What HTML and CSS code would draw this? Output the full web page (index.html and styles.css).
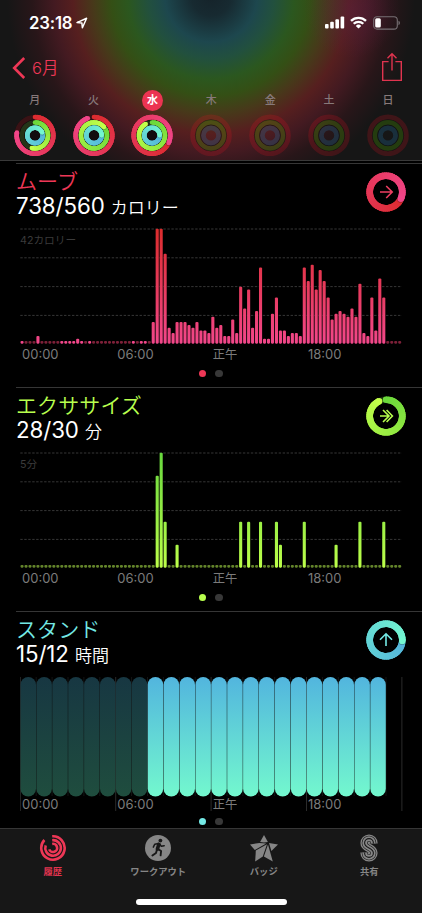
FILE: index.html
```html
<!DOCTYPE html>
<html lang="ja">
<head>
<meta charset="utf-8">
<title>アクティビティ</title>
<link rel="stylesheet" href="styles.css">
</head>
<body>
<div class="app">
  <header class="header">
    <div class="status">
      <span class="time">23:18</span>
      <svg class="loc" width="12" height="12" viewBox="0 0 12 12"><path d="M1 5.6 10.6 1.2 6.4 10.8 5.9 6.1Z" fill="none" stroke="#fff" stroke-width="1.5" stroke-linejoin="round"/></svg>
      <svg class="signal" width="20" height="13" viewBox="0 0 20 13" fill="#fff"><rect x="0" y="8" width="3.6" height="4.6" rx="1"/><rect x="5.2" y="5.8" width="3.6" height="6.8" rx="1"/><rect x="10.4" y="3.3" width="3.6" height="9.3" rx="1"/><rect x="15.6" y=".6" width="3.6" height="12" rx="1"/></svg>
      <svg class="wifi" width="17" height="13" viewBox="0 0 17 13"><g fill="none" stroke="#fff" stroke-width="2.3"><path d="M1 4.9a10.6 10.6 0 0 1 15 0"/><path d="M3.7 7.8a6.8 6.8 0 0 1 9.6 0"/></g><path d="M8.5 12.6 5.8 9.9a3.9 3.9 0 0 1 5.4 0Z" fill="#fff"/></svg>
      <svg class="battery" width="27" height="14" viewBox="0 0 27 14"><rect x=".7" y=".7" width="23.6" height="12.4" rx="3.4" fill="none" stroke="#777074" stroke-width="1.1"/><path d="M25.5 4.8v4.4a2.4 2.4 0 0 0 0-4.4Z" fill="#777074"/><rect x="2.2" y="2.3" width="5.6" height="9.2" rx="1.5" fill="#fff"/></svg>
    </div>
    <nav class="nav">
      <svg width="14" height="24" viewBox="0 0 14 24"><path d="M12.2 2 2.2 12l10 10" fill="none" stroke="#ee3756" stroke-width="2.6"/></svg>
      <span class="back">6月</span>
      <svg class="share" width="22" height="30" viewBox="0 0 22 30"><path d="M7.6 9.6H1.7v18.8h18.6V9.6h-5.9M11 18.5V2M6.5 6.3 11 1.8l4.5 4.5" fill="none" stroke="#e0344f" stroke-width="1.4"/></svg>
    </nav>
    <div class="week" id="week"></div>
  </header>

  <main>
    <section class="card move">
      <div class="head"><div><h2>ムーブ</h2><p class="value">738/560 <small>カロリー</small></p></div><svg class="badge" width="40" height="40" viewBox="-20 -20 40 40" data-ring="move"></svg></div>
      <div class="plot"><svg id="moveChart" width="384" height="117" viewBox="0 0 384 117"></svg><span class="scale">42カロリー</span></div>
      <div class="axis"><span>00:00</span><span>06:00</span><span class="jp">正午</span><span>18:00</span></div>
      <div class="pager"><i class="on"></i><i></i></div>
    </section>
    <section class="card exercise">
      <div class="head"><div><h2>エクササイズ</h2><p class="value">28/30 <small>分</small></p></div><svg class="badge" width="40" height="40" viewBox="-20 -20 40 40" data-ring="exercise"></svg></div>
      <div class="plot"><svg id="exerciseChart" width="384" height="117" viewBox="0 0 384 117"></svg><span class="scale">5分</span></div>
      <div class="axis"><span>00:00</span><span>06:00</span><span class="jp">正午</span><span>18:00</span></div>
      <div class="pager"><i class="on"></i><i></i></div>
    </section>
    <section class="card stand">
      <div class="head"><div><h2>スタンド</h2><p class="value">15/12 <small>時間</small></p></div><svg class="badge" width="40" height="40" viewBox="-20 -20 40 40" data-ring="stand"></svg></div>
      <div class="plot"><svg id="standChart" width="384" height="136" viewBox="0 0 384 136"></svg></div>
      <div class="axis"><span>00:00</span><span>06:00</span><span class="jp">正午</span><span>18:00</span></div>
      <div class="pager"><i class="on"></i><i></i></div>
    </section>
  </main>

  <footer class="tabs">
    <div class="tab active">
      <svg width="28" height="28" viewBox="-14 -14 28 28"><g fill="none" stroke="#ee3756" stroke-width="2.6"><path d="M-.8-11.7A11.7 11.7 0 1 1-8.6-8"/><path d="M-.8-7.8A7.8 7.8 0 1 1-7.3-2.6"/><path d="M-.8-4.1A4.1 4.1 0 1 1-3.8 1.4"/></g></svg>
      <span>履歴</span>
    </div>
    <div class="tab">
      <svg width="28" height="28" viewBox="-14 -14 28 28"><circle r="13" fill="#868686"/><circle cx="2.4" cy="-7.4" r="1.9" fill="#171717"/><g fill="none" stroke="#171717" stroke-linecap="round" stroke-linejoin="round"><path d="M.8-3.6-.6 1" stroke-width="3.6"/><path d="M.6-4.6-3.2-3.8-4.7-.8M1.6-4.3 3.3-1.7 6.2-2.3" stroke-width="1.5"/><path d="M0 1.1 3.1 3 2.6 7.4M-1 1.4-2 4.9-5.6 7.5" stroke-width="1.9"/></g></svg>
      <span>ワークアウト</span>
    </div>
    <div class="tab">
      <svg width="30" height="28" viewBox="-15 -14 30 28" fill="#868686"><path d="M0-13 3.9-6 0-5.4-3.9-6Z"/><path d="M-14-3.6-4.6-4.9 2.2-4.4-9.2 2Z"/><path d="M5-5 14-3.6 7.4 2.9Z"/><path d="M-8.2 2.6 3-3.7-1.2 8.6-8.8 13.4Z"/><path d="M4-3.4 8.8 13.4-.1 8.6Z"/></svg>
      <span>バッジ</span>
    </div>
    <div class="tab">
      <svg width="20" height="28" viewBox="0 -1 20 28"><g fill="none"><path class="s s1" d="M14.4 8.5V8a4.4 4.4 0 0 0-8.8 0c0 5.6 8.8 4.4 8.8 10a4.4 4.4 0 0 1-8.8 0v-.5"/><path class="s s2" d="M14.4 8.5V8a4.4 4.4 0 0 0-8.8 0c0 5.6 8.8 4.4 8.8 10a4.4 4.4 0 0 1-8.8 0v-.5"/><path class="s s3" d="M14.4 8.5V8a4.4 4.4 0 0 0-8.8 0c0 5.6 8.8 4.4 8.8 10a4.4 4.4 0 0 1-8.8 0v-.5"/><path class="s s4" d="M14.4 8.5V8a4.4 4.4 0 0 0-8.8 0c0 5.6 8.8 4.4 8.8 10a4.4 4.4 0 0 1-8.8 0v-.5"/></g></svg>
      <span>共有</span>
    </div>
    <div class="home"></div>
  </footer>
</div>
<script src="app.js"></script>
</body>
</html>
```
FILE: styles.css
```css
* { box-sizing: border-box; }
body { margin: 0; background: #000; color: #fff; font-family: Inter, "Noto Sans CJK JP", sans-serif; }
svg { display: block; flex: none; }
h2, p { margin: 0; }
.app { width: 422px; height: 913px; display: flex; flex-direction: column; overflow: hidden; }

.header {
  height: 161px; flex: none; border-bottom: 1px solid #393939;
  background:
    radial-gradient(circle at 352px 10px, rgba(95, 32, 75, .38) 0, rgba(95, 32, 75, 0) 48px),
    radial-gradient(circle at 211px -4px, #15232a 0, #172a31 20px, #1d474e 46px, #22503e 63px, #2b571f 83px, #344f15 100px, #47391a 118px, #561f1f 138px, #431a21 157px, #281619 179px, #161616 204px) #161616;
}
.status { display: flex; height: 46px; padding: 16px 22px 0 29px; align-items: flex-start; }
.time { font-size: 16.8px; line-height: 14px; font-weight: 600; width: 47px; letter-spacing: -.2px; white-space: nowrap; }
.loc { margin-top: 1px; }
.signal { margin: 0 5px 0 auto; }
.wifi { margin-right: 6px; }
.battery { width: 27px; }
.nav { display: flex; height: 44px; padding: 9px 19px 0 12px; align-items: flex-start; color: #ee3756; }
.nav svg:first-child { margin-top: 1px; }
.back { font-size: 16.5px; line-height: 26px; margin-left: 6px; font-weight: 350; }
.share { margin: -3px 0 0 auto; }
.week { display: grid; grid-template-columns: repeat(7, 58.86px); margin-left: 5.3px; }
.day { display: flex; flex-direction: column; align-items: center; }
.day span { width: 21px; height: 21px; border-radius: 50%; font-size: 11px; font-weight: 500; line-height: 21px; text-align: center; color: #87797a; }
.day.today span { background: #ec3452; color: #fff; font-weight: 700; }
.day svg { margin-top: 3px; }

main { height: 667px; padding: 2px 0 0 16px; flex: none; }
.card { height: 224px; border-top: 1px solid #363636; }
.head { display: flex; justify-content: space-between; height: 64px; padding: 6px 16px 0 0; }
.head h2 { font-size: 21px; line-height: 24px; font-weight: 350; height: 24px; white-space: nowrap; letter-spacing: .1px; }
.value { font-size: 22.3px; line-height: 24px; height: 24px; font-weight: 400; white-space: nowrap; letter-spacing: -.1px; }
.value small { font-size: 17px; letter-spacing: 0; font-weight: 350; }
.badge { margin-top: 2px; }
.move h2 { color: #ee3756; }
.exercise h2 { color: #b8ff4e; }
.stand h2 { color: #74e9e5; }
.plot { display: grid; margin-left: 4px; height: 117px; }
.plot > * { grid-area: 1 / 1; }
.scale { font-size: 10.7px; line-height: 14px; color: #3b3b3b; margin-top: 6px; }
.axis { display: grid; grid-template-columns: repeat(4, 95.35px); margin-left: 6px; height: 16px; line-height: 16px; font-size: 13px; color: #7b7b7b; margin-top: 1px; }
.axis .jp { font-size: 12.3px; padding-top: 1px; }
.pager { display: flex; gap: 9px; margin: 8px 0 0 183px; }
.pager i { width: 7.4px; height: 7.4px; border-radius: 50%; background: #383838; }
.move .on { background: #ee3756; }
.exercise .on { background: #b8ff4e; }
.stand .on { background: #74e9e5; }
.stand .plot { height: 120px; margin-top: 1px; }
.stand .axis { margin-top: -1px; }
.stand .pager { margin-top: 6px; }

.tabs { height: 85px; flex: none; background: #171717; border-top: 1px solid #363636; display: grid; grid-template-columns: repeat(4, 105.5px); grid-template-rows: 70px 6px; }
.tab { display: flex; flex-direction: column; align-items: center; padding-top: 5px; color: #868686; font-size: 9.3px; font-weight: 700; line-height: 14px; }
.tab span { margin-top: 3px; white-space: nowrap; }
.tab.active { color: #e0344f; }
.s { stroke: #868686; }
.s1 { stroke-width: 8.4; }
.s2 { stroke: #171717; stroke-width: 5.8; }
.s3 { stroke-width: 4.6; }
.s4 { stroke: #171717; stroke-width: 1.1; }
.home { grid-column: 1 / -1; justify-self: center; width: 151px; height: 6px; border-radius: 3px; background: #fff; }
```
FILE: app.js
```js
const COLORS = {
  move: [[220, 44, 48], [241, 70, 138]],
  exercise: [[108, 216, 60], [196, 255, 74]],
  stand: [[84, 180, 220], [116, 248, 208]]
};
const mix = ([a, b], t) => 'rgb(' + a.map((v, i) => Math.round(v + (b[i] - v) * t)).join(',') + ')';

// Progress ring starting at twelve o'clock; values above 1 overlap the first lap.
function ring(r, w, frac, kind) {
  const n = 60, pt = a => (r * Math.sin(a)).toFixed(2) + ' ' + (-r * Math.cos(a)).toFixed(2);
  let out = '';
  const end = frac * 2 * Math.PI;
  const start = Math.max(0, frac - 1) * 2 * Math.PI;
  const [ax, ay] = pt(0).split(' ');
  out += `<circle r="${r}" fill="none" stroke="${mix(COLORS[kind], 0)}" stroke-width="${w}" opacity=".2"/>`;
  if (frac < 1) out += `<circle cx="${ax}" cy="${ay}" r="${w / 2}" fill="${mix(COLORS[kind], 0)}"/>`;
  for (let i = 0; i < n; i++) {
    const a = start + (end - start) * i / n;
    const b = Math.min(end, start + (end - start) * (i + 2.5) / n);
    out += `<path d="M${pt(a)}A${r} ${r} 0 0 1 ${pt(b)}" fill="none" stroke="${mix(COLORS[kind], i / n)}" stroke-width="${w}"/>`;
  }
  const [ex, ey] = pt(end).split(' ');
  if (frac > 1) {
    const [sx, sy] = pt(end + .7 / r).split(' ');
    out += `<circle cx="${sx}" cy="${sy}" r="${w / 2 - .1}" fill="#000" opacity=".3"/>`;
  }
  return out + `<circle cx="${ex}" cy="${ey}" r="${w / 2}" fill="${mix(COLORS[kind], 1)}"/>`;
}

const week = [['月', .775, .54, 1.19], ['火', .945, 1.14, 1.25], ['水', 1.318, .92, 1.25], ['木'], ['金'], ['土'], ['日']];
document.getElementById('week').innerHTML = week.map(([d, m, e, s], i) => {
  const rings = m
    ? '<circle r="20.7" fill="#120c0e"/>' + ring(18.3, 4.6, m, 'move') + ring(13, 4.5, e, 'exercise') + ring(7.7, 4.6, s, 'stand')
    : '<g fill="none"><circle r="18.3" stroke="#fa1120" stroke-opacity=".18" stroke-width="5"/><circle r="15.6" stroke="#101010" stroke-opacity=".5"/><circle r="13" stroke="#4da000" stroke-opacity=".28" stroke-width="4.6"/><circle r="10.4" stroke="#101010" stroke-opacity=".6"/><circle r="7.6" stroke="#2474a0" stroke-opacity=".28" stroke-width="4.8"/></g>';
  return `<div class="day${i === 2 ? ' today' : ''}"><span>${d}</span><svg width="42" height="42" viewBox="-21 -21.4 42 42">${rings}</svg></div>`;
}).join('');

const arrows = {
  move: '<path d="M-6 0H6M.2-6 6.2 0 .2 6" stroke="#ee3f62"/>',
  exercise: '<path d="M-6 0H3M-3-6 3 0-3 6M.6-6 6.4 0 .6 6" stroke="#b8ff4e"/>',
  stand: '<path d="M0 6V-6M-6-.2 0-6.2 6-.2" stroke="#74e9e5"/>'
};
const progress = { move: 1.318, exercise: .93, stand: 1.26 };
document.querySelectorAll('.badge').forEach(el => {
  const k = el.dataset.ring;
  el.innerHTML = ring(16.3, 6.6, progress[k], k) + `<g fill="none" stroke-width="1.6">${arrows[k]}</g>`;
});

const PITCH = 3.975, BASE = 115.7;
function barChart(id, values, bright, top, bottom, dim) {
  let out = `<defs><linearGradient id="${id}G" gradientUnits="userSpaceOnUse" x1="0" y1="0" x2="0" y2="116"><stop offset="0" stop-color="${top}"/><stop offset="1" stop-color="${bottom}"/></linearGradient></defs>`;
  for (let g = 0; g < 4; g++) {
    const y = 1 + g * 28.8;
    out += `<path d="M.3 ${y}H382" stroke="#363636" stroke-width="1" stroke-dasharray="2.4 1.575"/>`;
  }
  for (let i = 0; i < 96; i++) {
    const x = (2.05 + i * PITCH - 1.55).toFixed(2);
    const h = values[i] || 2.8;
    const fill = values[i] ? `url(#${id}G)` : bright.includes(i) ? bottom : dim;
    out += `<rect x="${x}" y="${(BASE - h).toFixed(2)}" width="3.1" height="${h}" rx="1.1" fill="${fill}"/>`;
  }
  document.getElementById(id).innerHTML = out;
}
const moveValues = { 4: 7.7, 14: 5 };
[21.7, 115, 115, 90, 16, 10.7, 21.7, 21.7, 21.7, 18.7, 16, 21.7, 13.3, 13.3, 10.7, 27, 16, 18.7, 7.7, 7.7, 24.3, 10.7, 57, 35.3, 54.3, 16, 32.7, 76.3, 5, 5, 30, 46.3, 13.3, 13.3, 7.7, 10.7, 10.7, 7.7, 76.3, 62.7, 79, 54.3, 73.7, 62.7, 46.3, 24.3, 30, 32.7, 30, 27, 35.3, 27, 60, 10.7, 7.7, 46.3, 13.3, 65.3, 46.3]
  .forEach((v, i) => { moveValues[33 + i] = v; });
barChart('moveChart', moveValues, [0, 10, 11, 12, 13, 15, 17, 28, 30, 31], '#dc2c2c', '#f2478a', '#7c2038');
barChart('exerciseChart', { 34: 92, 35: 115, 36: 46, 39: 23, 55: 46, 57: 46, 60: 46, 64: 46, 65: 23, 71: 46, 79: 23, 85: 46, 91: 46 }, [], '#67d83e', '#bdff4a', '#64852b');

const W = 15.9;
let stand = '<defs><linearGradient id="sg" x1="0" y1="0" x2="0" y2="1"><stop offset="0" stop-color="#52b5de"/><stop offset="1" stop-color="#73f8ce"/></linearGradient><linearGradient id="sd" x1="0" y1="0" x2="0" y2="1"><stop offset="0" stop-color="#173742"/><stop offset="1" stop-color="#1f4d3e"/></linearGradient></defs>';
for (let i = 0; i <= 24; i++) {
  stand += `<path d="M${(.3 + i * W).toFixed(1)} 0V${i % 6 ? 119 : 134}" stroke="${i % 6 ? '#141414' : '#2b2b2b'}"/>`;
}
for (let i = 0; i < 23; i++) {
  stand += `<rect x="${(.5 + i * W).toFixed(1)}" y="0" width="15.5" height="119.4" rx="7.75" fill="url(#${i < 8 ? 'sd' : 'sg'})"/>`;
}
document.getElementById('standChart').innerHTML = stand;
```
